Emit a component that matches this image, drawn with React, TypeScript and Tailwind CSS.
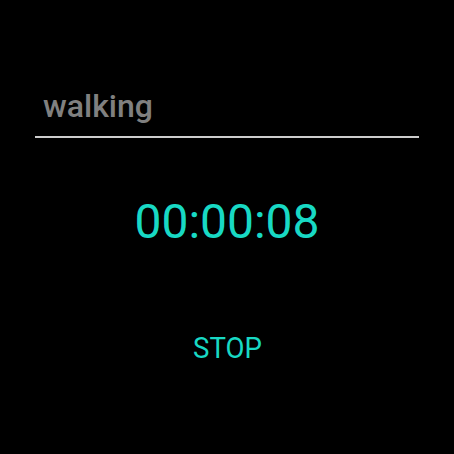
export default function App() {
  return (
    <div className="w-[454px] h-[454px] bg-black flex flex-col" style={{ fontFamily: "Roboto, 'Noto Sans', sans-serif" }}>
      <div className="mt-[86px] mx-[35px] border-b-2 border-[#cccccc] pl-[8px] pb-[10px]">
        <div className="text-[32px] leading-[40px] font-medium text-[#808080]">walking</div>
      </div>
      <div className="mt-[56px] text-center text-[48px] leading-[56px] text-[#18d9c4]">00:00:08</div>
      <div className="mt-[80px] flex justify-center">
        <span className="inline-block text-[30px] leading-[36px] text-[#18d9c4] scale-x-[0.92]">STOP</span>
      </div>
    </div>
  );
}
